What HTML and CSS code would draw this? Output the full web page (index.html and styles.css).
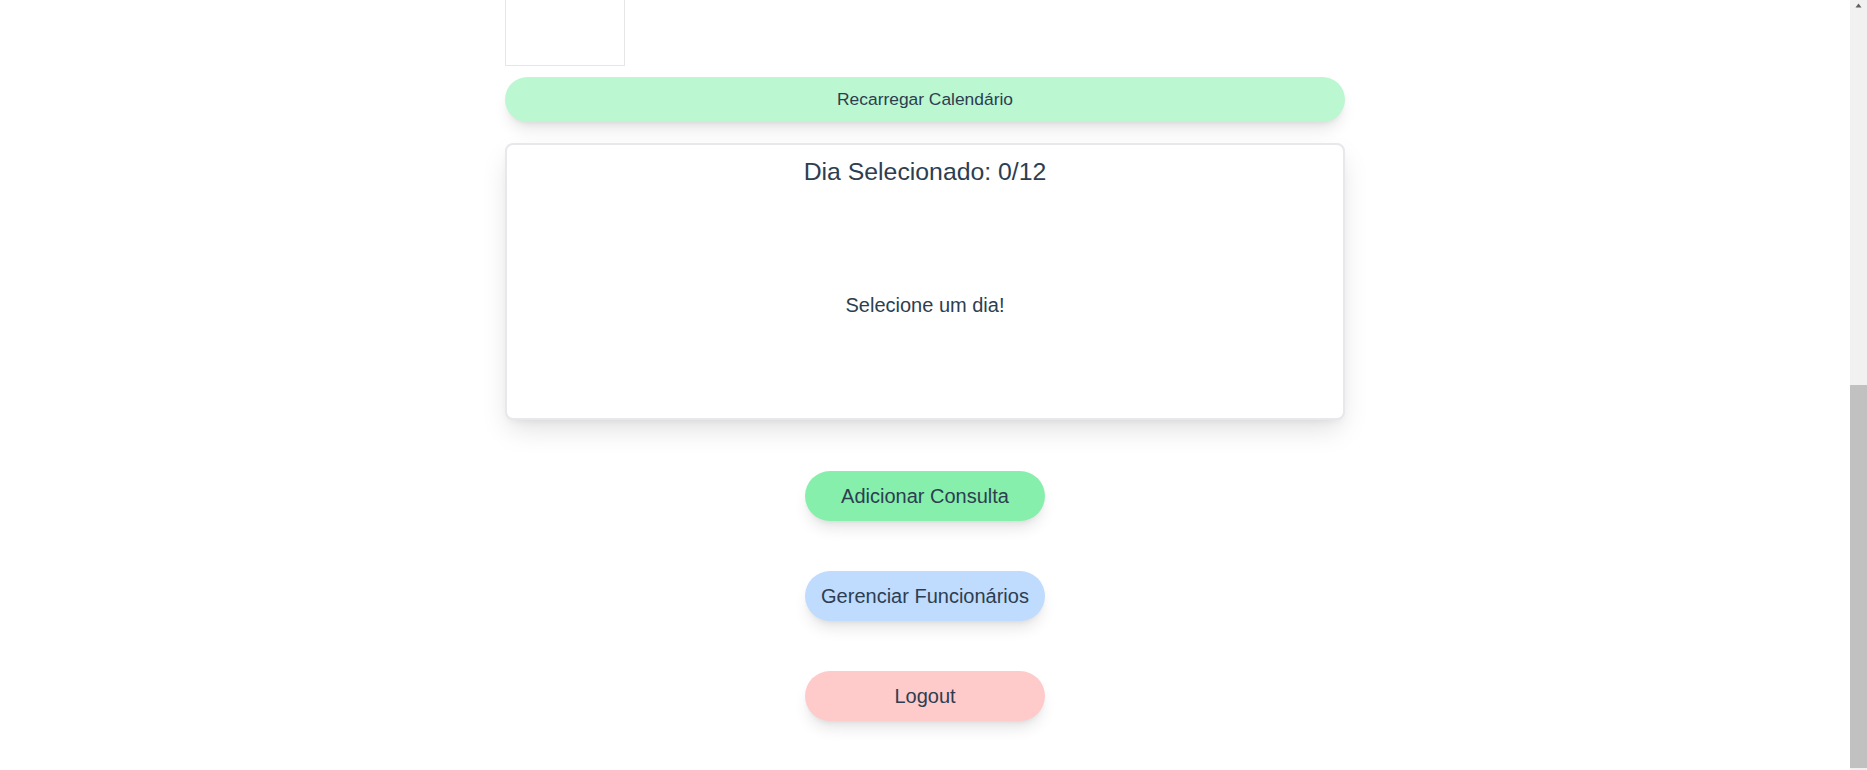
FILE: index.html
```html
<!DOCTYPE html>
<html lang="pt-BR">
<head>
<meta charset="utf-8">
<title>Calendário</title>
<link rel="stylesheet" href="styles.css">
</head>
<body>
<div class="window">
  <div class="viewport">
    <main class="app">
      <section class="calendar" aria-label="Calendário">
        <div class="grid">
          <div class="blank"></div><div class="blank"></div><div class="blank"></div><div class="blank"></div><div class="blank"></div><div class="day"></div><div class="day"></div>
          <div class="day"></div><div class="day"></div><div class="day"></div><div class="day"></div><div class="day"></div><div class="day"></div><div class="day"></div>
          <div class="day"></div><div class="day"></div><div class="day"></div><div class="day"></div><div class="day"></div><div class="day"></div><div class="day"></div>
          <div class="day"></div><div class="day"></div><div class="day"></div><div class="day"></div><div class="day"></div><div class="day"></div><div class="day"></div>
          <div class="day"></div><div class="day"></div><div class="day"></div><div class="day"></div><div class="day"></div><div class="day"></div><div class="day"></div>
          <div class="day"></div>
        </div>
      </section>

      <button class="reload">Recarregar Calendário</button>

      <section class="card">
        <h2 class="card-title">Dia Selecionado: 0/12</h2>
        <div class="card-body">
          <p class="empty">Selecione um dia!</p>
        </div>
      </section>

      <nav class="actions">
        <button class="pill pill-green">Adicionar Consulta</button>
        <button class="pill pill-blue">Gerenciar Funcionários</button>
        <button class="pill pill-red">Logout</button>
      </nav>
    </main>
  </div>
  <div class="scrollbar" aria-hidden="true">
    <div class="scroll-up">
      <svg width="7" height="5" viewBox="0 0 7 5"><path d="M3.5 0.5 L6.5 4.5 H0.5 Z" fill="#606060"/></svg>
    </div>
    <div class="scroll-track"></div>
    <div class="scroll-thumb"></div>
  </div>
</div>
</body>
</html>
```

FILE: styles.css
```css
* { box-sizing: border-box; }

html, body {
  margin: 0;
  padding: 0;
  height: 100%;
  background: #ffffff;
  overflow: hidden;
}

body {
  font-family: "Liberation Sans", Arial, Helvetica, sans-serif;
  color: #2c3e50;
}

.window {
  display: flex;
  height: 100vh;
}

.viewport {
  flex: 1;
  height: 100vh;
  overflow: hidden;
  display: flex;
  flex-direction: column;
  justify-content: flex-end;
}

.app {
  width: 840px;
  margin: 0 auto;
  padding: 0 0 49px;
  flex-shrink: 0;
}

.grid {
  display: grid;
  grid-template-columns: repeat(7, 120px);
  grid-auto-rows: 100px;
}

.day {
  border: 1px solid #e6e6e6;
}

.reload {
  display: block;
  width: 100%;
  height: 45px;
  margin-top: 11px;
  border: none;
  border-radius: 23px;
  background: #bbf7d0;
  color: #2c3e50;
  font-family: inherit;
  font-size: 17.4px;
  box-shadow: 0 10px 15px -3px rgba(0, 0, 0, 0.1), 0 4px 6px -4px rgba(0, 0, 0, 0.1);
}

.card {
  margin-top: 21px;
  height: 277px;
  border: 2px solid #e7e7ec;
  border-radius: 8px;
  background: #fff;
  display: flex;
  flex-direction: column;
  padding-top: 12px;
  box-shadow: 0 12px 28px -4px rgba(0, 0, 0, 0.13), 0 4px 8px -4px rgba(0, 0, 0, 0.08);
}

.card-title {
  margin: 0;
  font-size: 24.8px;
  font-weight: normal;
  text-align: center;
  line-height: 29px;
}

.card-body {
  flex: 1;
  display: flex;
  align-items: center;
  justify-content: center;
  padding-top: 6px;
}

.empty {
  margin: 0;
  font-size: 20px;
  line-height: 23px;
}

.actions {
  margin-top: 51px;
  display: flex;
  flex-direction: column;
  align-items: center;
  gap: 50px;
}

.pill {
  width: 240px;
  height: 50px;
  border: none;
  border-radius: 25px;
  color: #2c3e50;
  font-family: inherit;
  font-size: 20px;
  box-shadow: 0 10px 15px -3px rgba(0, 0, 0, 0.1), 0 4px 6px -4px rgba(0, 0, 0, 0.1);
}

.pill-green { background: #86efac; }
.pill-blue { background: #bfdbfe; }
.pill-red { background: #fecaca; }

.scrollbar {
  width: 17px;
  height: 100vh;
  background: #f1f1f1;
  display: flex;
  flex-direction: column;
}

.scroll-up {
  height: 17px;
  display: flex;
  justify-content: center;
  padding-top: 3px;
  flex-shrink: 0;
}

.scroll-up svg { display: block; }

.scroll-track {
  height: 368px;
  flex-shrink: 0;
}

.scroll-thumb {
  height: 383px;
  background: #c1c1c1;
  flex-shrink: 0;
}
```
